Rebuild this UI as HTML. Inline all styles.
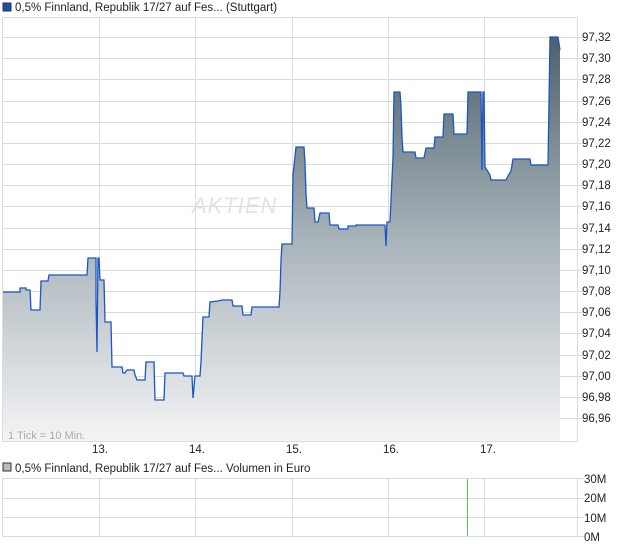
<!DOCTYPE html>
<html><head><meta charset="utf-8"><style>
body{margin:0;background:#fff;width:620px;height:546px;overflow:hidden;font-family:"Liberation Sans",sans-serif}
svg{position:absolute;left:0;top:0}
</style></head><body>
<svg width="620" height="546" viewBox="0 0 620 546" font-family="Liberation Sans, sans-serif">
<defs>
<linearGradient id="g" x1="0" y1="37" x2="0" y2="441" gradientUnits="userSpaceOnUse">
<stop offset="0" stop-color="#4d606c"/>
<stop offset="0.5" stop-color="#a8b3ba"/>
<stop offset="1" stop-color="#f3f4f5"/>
</linearGradient>
</defs>
<rect x="3" y="3" width="8" height="8" fill="#1a4fb5" stroke="#333" stroke-width="1"/>
<text x="15" y="11" font-size="11.5" fill="#222">0,5% Finnland, Republik 17/27 auf Fes... (Stuttgart)</text>
<g stroke="#dcdcdc" stroke-width="1">
<line x1="2.5" y1="17.5" x2="577.5" y2="17.5"/>
<line x1="2.5" y1="17.5" x2="2.5" y2="441.5"/>
<line x1="577.5" y1="17.5" x2="577.5" y2="441.5"/>
<line x1="2.5" y1="441.5" x2="577.5" y2="441.5"/>
<line x1="99.5" y1="17" x2="99.5" y2="441"/>
<line x1="195.5" y1="17" x2="195.5" y2="441"/>
<line x1="292.5" y1="17" x2="292.5" y2="441"/>
<line x1="388.5" y1="17" x2="388.5" y2="441"/>
<line x1="484.5" y1="17" x2="484.5" y2="441"/>
</g>
<g stroke="#dcdcdc" stroke-width="1" id="hg"></g>
<path id="area" fill="url(#g)" stroke="none" d=""/>
<polyline id="ln" fill="none" stroke="#1a56c4" stroke-width="1.3" points=""/>
<text x="192" y="213" font-size="22" fill="#e8e2dc" font-style="italic" letter-spacing="1">AKTIEN</text>
<text x="8" y="439" font-size="11" fill="#aaa">1 Tick = 10 Min.</text>
<g font-size="11.5" fill="#222" text-anchor="middle">
<text x="100" y="453">13.</text><text x="197" y="453">14.</text><text x="294" y="453">15.</text><text x="391" y="453">16.</text><text x="488" y="453">17.</text>
</g>
<g id="yl" font-size="11.5" fill="#222"></g>
<rect x="3" y="463" width="8" height="8" fill="#bbb" stroke="#333" stroke-width="1"/>
<text x="15" y="472" font-size="11.5" fill="#222">0,5% Finnland, Republik 17/27 auf Fes... Volumen in Euro</text>
<g stroke="#dcdcdc" stroke-width="1">
<rect x="2.5" y="478.5" width="575" height="58" fill="none"/>
<line x1="2.5" y1="498.5" x2="577.5" y2="498.5"/>
<line x1="2.5" y1="517.5" x2="577.5" y2="517.5"/>
<line x1="577" y1="478.5" x2="584" y2="478.5"/>
<line x1="577" y1="498.5" x2="584" y2="498.5"/>
<line x1="577" y1="517.5" x2="584" y2="517.5"/>
<line x1="577" y1="536.5" x2="584" y2="536.5"/>
<line x1="99.5" y1="478" x2="99.5" y2="536"/>
<line x1="195.5" y1="478" x2="195.5" y2="536"/>
<line x1="292.5" y1="478" x2="292.5" y2="536"/>
<line x1="388.5" y1="478" x2="388.5" y2="536"/>
<line x1="484.5" y1="478" x2="484.5" y2="536"/>
</g>
<rect x="467" y="479" width="1" height="57" fill="#55cc55"/>
<g font-size="11.5" fill="#222">
<text x="584" y="483">30M</text><text x="584" y="502">20M</text><text x="584" y="522">10M</text><text x="584" y="541">0M</text>
</g>
</svg>
<script>
var ns="http://www.w3.org/2000/svg";
var hg=document.getElementById('hg'),yl=document.getElementById('yl');
for(var i=0;i<=18;i++){var y=37+i*21.17;var v=(97.32-i*0.02).toFixed(2).replace('.',',');
var l=document.createElementNS(ns,'line');l.setAttribute('x1',2.5);l.setAttribute('x2',585);l.setAttribute('y1',Math.round(y)+.5);l.setAttribute('y2',Math.round(y)+.5);hg.appendChild(l);
var t=document.createElementNS(ns,'text');t.setAttribute('x',582);t.setAttribute('y',Math.round(y)+4);t.textContent=v;yl.appendChild(t);}
var s=[[3,292],[20,292],[20,288],[26,288],[26,290],[30,290],[31,310],[40,310],[41,281],[48,281],[49,275],[87,275],[88,258],[96,258],[96,300],[97,352],[98,258],[99,258],[100,280],[104,280],[105,322],[111,322],[112,367],[122,367],[123,373],[125,373],[127,370],[134,370],[135,375],[137,380],[145,380],[146,362],[154,362],[155,400],[164,400],[165,373],[183,373],[184,376],[192,376],[193,398],[195,376],[200,376],[201,362],[203,317],[209,317],[210,302],[218,301],[222,300],[232,300],[233,306],[242,306],[243,315],[251,315],[252,307],[279,307],[280,292],[281,260],[282,244],[292,244],[293,175],[296,147],[304,147],[305,163],[306,193],[307,208],[314,208],[315,222],[318,222],[320,213],[329,213],[330,225],[338,225],[339,229],[348,229],[348,226],[356,226],[356,225],[385,225],[386,246],[387,222],[390,222],[393,157],[394,92],[400,92],[401,107],[402,137],[403,152],[415,152],[416,158],[424,158],[426,148],[434,148],[435,137],[443,137],[444,114],[453,114],[454,134],[467,134],[468,92],[481,92],[482,170],[483,92],[484,92],[485,167],[490,175],[491,180],[506,180],[508,176],[511,171],[513,159],[530,159],[531,165],[548,165],[549,102],[550,37],[558,37],[560,50]];
var p=s.map(function(a){return a.join(',')}).join(' ');
document.getElementById('ln').setAttribute('points',p);
document.getElementById('area').setAttribute('d','M3,441 L'+s.map(function(a){return a.join(',')}).join(' L')+' L560,441 Z');
</script>
</body></html>
